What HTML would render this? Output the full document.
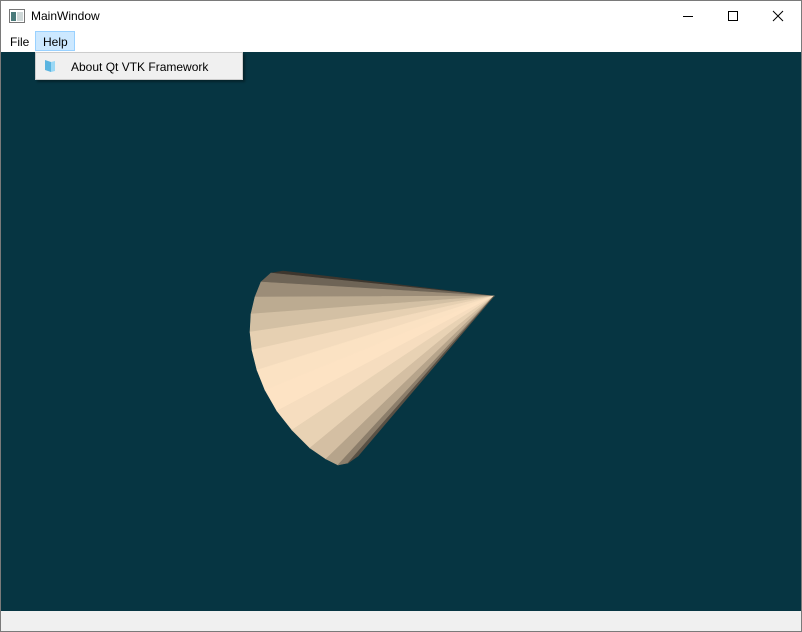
<!DOCTYPE html>
<html><head><meta charset="utf-8">
<style>
html,body{margin:0;padding:0;width:802px;height:632px;overflow:hidden;font-family:"Liberation Sans",sans-serif;}
.win{position:absolute;left:0;top:0;width:800px;height:630px;border:1px solid #7a7a7a;background:#fff;}
.title{position:absolute;left:0;top:0;width:800px;height:30px;background:#fff;}
.title .t{position:absolute;left:30px;top:8px;font-size:12px;color:#000;}
.menu{position:absolute;left:0;top:30px;width:800px;height:21px;background:#fff;font-size:12px;}
.menu span{position:absolute;top:4px;}
.help{position:absolute;left:34px;top:0;width:40px;height:20px;background:#cce8ff;border:1px solid #99d1ff;box-sizing:border-box;}
.view{position:absolute;left:0;top:51px;width:800px;height:559px;background:#063542;}
.status{position:absolute;left:0;top:610px;width:800px;height:20px;background:#f0f0f0;}
.dd{position:absolute;left:34px;top:51px;width:206px;height:26px;background:#f0f0f0;border:1px solid #ccc;box-shadow:2px 2px 2px rgba(0,0,0,.35);font-size:12px;}
polygon{stroke-width:0.6;stroke-linejoin:round}
</style></head><body>
<div class="win">
 <div class="title">
  <svg style="position:absolute;left:8px;top:8px" width="16" height="14"><rect x="0.5" y="0.5" width="15" height="13" fill="#fff" stroke="#777"/><rect x="2" y="3" width="5" height="9" fill="#4a7a7a"/><rect x="8" y="3" width="6" height="9" fill="#cfd8d8"/></svg>
  <div class="t">MainWindow</div>
  <svg style="position:absolute;left:680px;top:8px" width="110" height="14">
   <line x1="2" y1="7.5" x2="12" y2="7.5" stroke="#000"/>
   <rect x="47.5" y="2.5" width="9" height="9" fill="none" stroke="#000"/>
   <path d="M92 2 L102 12 M102 2 L92 12" stroke="#000"/>
  </svg>
 </div>
 <div class="menu"><span style="left:9px">File</span><div class="help"></div><span style="left:42px">Help</span></div>
 <div class="view">
  <svg width="800" height="559" style="position:absolute;left:0;top:0">
   <polygon points="493,244 282,219 270,221" fill="#3d362e" stroke="#3d362e"/>
   <polygon points="493,244 270,221 260,230" fill="#6e6456" stroke="#6e6456"/>
   <polygon points="493,244 260,230 254,245" fill="#9c8d78" stroke="#9c8d78"/>
   <polygon points="493,244 254,245 250,262" fill="#bcab91" stroke="#bcab91"/>
   <polygon points="493,244 250,262 249,280" fill="#d3c0a4" stroke="#d3c0a4"/>
   <polygon points="493,244 249,280 251,298" fill="#e6d0b2" stroke="#e6d0b2"/>
   <polygon points="493,244 251,298 256,318" fill="#f3dbbd" stroke="#f3dbbd"/>
   <polygon points="493,244 256,318 264,338" fill="#fbe2c3" stroke="#fbe2c3"/>
   <polygon points="493,244 264,338 276,359" fill="#fde3c4" stroke="#fde3c4"/>
   <polygon points="493,244 276,359 291,378" fill="#f6ddbf" stroke="#f6ddbf"/>
   <polygon points="493,244 291,378 309,396" fill="#e8d2b4" stroke="#e8d2b4"/>
   <polygon points="493,244 309,396 325,407" fill="#d4bfa3" stroke="#d4bfa3"/>
   <polygon points="493,244 325,407 337,413" fill="#b6a48b" stroke="#b6a48b"/>
   <polygon points="493,244 337,413 347,411" fill="#8c7e6b" stroke="#8c7e6b"/>
   <polygon points="493,244 347,411 357,404" fill="#5a5145" stroke="#5a5145"/>
  </svg>
 </div>
 <div class="dd">
  <svg style="position:absolute;left:8px;top:6px" width="12" height="14"><path d="M1 1 L7 3 L7 13 L1 11 Z" fill="#5ab4e0"/><path d="M7 3 L11 2 L11 12 L7 13 Z" fill="#9ad8f5"/></svg>
  <span style="position:absolute;left:35px;top:7px">About Qt VTK Framework</span>
 </div>
 <div class="status"></div>
</div>
</body></html>
